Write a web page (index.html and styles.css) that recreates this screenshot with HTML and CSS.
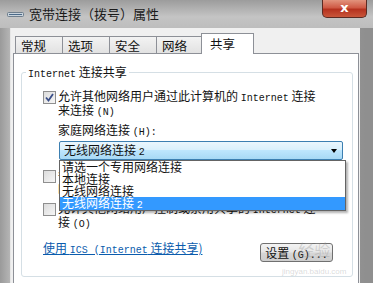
FILE: index.html
```html
<!DOCTYPE html>
<html lang="zh-CN">
<head>
    <meta charset="UTF-8">
    <title>宽带连接（拨号）属性</title>
    <link rel="stylesheet" href="styles.css">
</head>
<body>
    <div class="window">
        <div class="titlebar">
            <svg class="title-icon" width="17" height="6" viewBox="0 0 17 6">
                <rect x="0.5" y="1.5" width="16" height="4" rx="1" fill="#c9d3dc" stroke="#6f7e8c"/>
                <line x1="2" y1="3.5" x2="15" y2="3.5" stroke="#4b6a88"/>
            </svg>
            <div class="title">宽带连接（拨号）属性</div>
            <div class="close">x</div>
        </div>

        <div class="client">
            <div class="tabs">
                <div class="tab">常规</div>
                <div class="tab">选项</div>
                <div class="tab">安全</div>
                <div class="tab">网络</div>
                <div class="tab active">共享</div>
            </div>

            <div class="panel">
                <fieldset class="group">
                    <legend><span class="en">Internet</span> 连接共享</legend>

                    <div class="option">
                        <span class="check checked">
                            <svg width="9" height="9" viewBox="0 0 9 9"><path d="M1 4.5 L3.5 7.5 L8 1" fill="none" stroke="#3b4f88" stroke-width="1.8"/></svg>
                        </span>
                        <div class="label">允许其他网络用户通过此计算机的 <span class="en">Internet</span> 连接<br>来连接 <span class="en">(N)</span></div>
                    </div>

                    <div class="home-label">家庭网络连接 <span class="en">(H):</span></div>

                    <div class="select-wrap">
                        <div class="select">
                            <span>无线网络连接 <span class="en">2</span></span>
                            <span class="arrow"></span>
                        </div>
                        <ul class="dropdown">
                            <li>请选一个专用网络连接</li>
                            <li>本地连接</li>
                            <li>无线网络连接</li>
                            <li class="selected">无线网络连接 <span class="en">2</span></li>
                        </ul>
                    </div>

                    <div class="option second">
                        <span class="check"></span>
                        <div class="label">每当这台计算机上的某个程序试图访问 <span class="en">Internet</span><br>时建立一个拨号连接 <span class="en">(E)</span></div>
                    </div>

                    <div class="option third">
                        <span class="check"></span>
                        <div class="label">允许其他网络用户控制或禁用共享的 <span class="en">Internet</span> 连<br>接 <span class="en">(O)</span></div>
                    </div>

                    <div class="footer">
                        <a class="link">使用 <span class="en">ICS (Internet</span> 连接共享)</a>
                        <div class="button">设置 <span class="en">(G)...</span></div>
                    </div>
                </fieldset>
            </div>
        </div>
        <div class="watermark">经验<br><small>jingyan.baidu.com</small></div>
    </div>
</body>
</html>
```

FILE: styles.css
```css
body {
    margin: 0;
    width: 373px;
    height: 283px;
    overflow: hidden;
    font-family: "Noto Sans CJK SC", sans-serif;
    font-size: 12px;
    line-height: 13px;
    color: #111;
}

.en {
    font-family: "Liberation Mono", monospace;
    font-size: 10px;
    line-height: 1;
}

.window {
    position: relative;
    height: 283px;
    overflow: hidden;
    background: linear-gradient(90deg, #9a9a9a 0%, #b8b8b8 3%, #a2a2a2 30%, #c7c7c7 60%, #8f8f8f 98%);
    display: flex;
    flex-direction: column;
}

.titlebar {
    height: 28px;
    flex-shrink: 0;
    display: flex;
    align-items: flex-start;
    padding-left: 7px;
    background: linear-gradient(180deg, #9c9c9c, #c4c4c4 60%, #bdbdbd);
}

.title-icon {
    margin-top: 11px;
}

.title {
    margin-top: 7px;
    margin-left: 5px;
    font-size: 13px;
    line-height: 14px;
    color: #1a1a1a;
}

.close {
    margin-left: auto;
    margin-right: 6px;
    width: 45px;
    height: 18px;
    box-sizing: border-box;
    border: 1px solid #5b2b23;
    border-top: none;
    border-radius: 0 0 5px 5px;
    background: linear-gradient(180deg, #e2937d, #cf5a45 45%, #b5321f 55%, #c9563a);
    color: #fff;
    font-family: "DejaVu Sans", sans-serif;
    font-weight: bold;
    font-size: 13px;
    line-height: 15px;
    text-align: center;
}

.client {
    flex: 1;
    margin-left: 10px;
    width: 350px;
    box-sizing: border-box;
    padding: 5px 1px 0 2px;
    background: #f0f0f0;
    border-left: 1px solid #e6e6e6;
}

.tabs {
    display: flex;
    padding-left: 2px;
    height: 20px;
    align-items: flex-end;
}

.tab {
    width: 47px;
    height: 17px;
    box-sizing: border-box;
    border: 1px solid #8d9097;
    border-bottom: none;
    border-right: none;
    padding-left: 5px;
    line-height: 17px;
    font-size: 12.5px;
    background: linear-gradient(180deg, #f3f3f3, #e2e2e2);
}

.tab.active {
    width: 53px;
    height: 21px;
    margin: 0 0 -1px -2px;
    padding-left: 8px;
    line-height: 20px;
    border-right: 1px solid #8d9097;
    background: #fff;
    position: relative;
}

.panel {
    height: 218px;
    overflow: hidden;
    background: #fff;
    border: 1px solid #8d9097;
    padding: 11px 0 0 7px;
}

.group {
    margin: 0;
    width: 332px;
    height: 212px;
    box-sizing: border-box;
    border: 1px solid #d5dfe5;
    border-radius: 3px;
    padding: 10px 8px 0 21px;
}

.group legend {
    padding: 0 2px;
    margin-left: -17px;
    line-height: 14px;
}

.option {
    display: flex;
    align-items: flex-start;
    gap: 2px;
}

.check {
    width: 13px;
    height: 13px;
    box-sizing: border-box;
    border: 1px solid #8f8f8f;
    background: linear-gradient(135deg, #dcdcdc, #f6f6f6);
    margin-top: 1px;
    display: flex;
    align-items: center;
    justify-content: center;
    flex-shrink: 0;
}

.label {
    line-height: 12.5px;
}

.home-label {
    margin: 5px 0 0 15px;
}

.select-wrap {
    position: relative;
    margin: 3px 0 0 16px;
    width: 284px;
}

.select {
    height: 19px;
    box-sizing: border-box;
    border: 1px solid #3c7fb1;
    border-radius: 2px;
    background: linear-gradient(180deg, #eaf6fd, #d9f0fc 45%, #bee6fd 50%, #a7d9f5);
    display: flex;
    align-items: center;
    justify-content: space-between;
    padding: 0 5px 0 4px;
}

.arrow {
    width: 0;
    height: 0;
    border-left: 3px solid transparent;
    border-right: 3px solid transparent;
    border-top: 4px solid #000;
}

.dropdown {
    position: absolute;
    top: 19px;
    left: 0;
    width: 285px;
    margin: 0;
    padding: 0;
    list-style: none;
    background: #fff;
    border: 1px solid #646464;
    box-shadow: 2px 2px 2px rgba(0, 0, 0, 0.3);
    z-index: 2;
}

.dropdown li {
    height: 12px;
    line-height: 12px;
    padding-left: 2px;
}

.dropdown li.selected {
    background: #3399ff;
    color: #fff;
    height: 13px;
}

.option.second {
    margin-top: 9px;
}

.option.third {
    margin-top: 5px;
}

.footer {
    display: flex;
    align-items: flex-start;
    justify-content: space-between;
    margin-top: 13px;
    padding-right: 11px;
}

.link {
    color: #0b5cad;
    text-decoration: underline;
    margin-top: -2px;
}

.button {
    width: 73px;
    height: 19px;
    box-sizing: border-box;
    border: 1px solid #707070;
    border-radius: 3px;
    background: linear-gradient(180deg, #f3f3f3, #e6e6e6 48%, #d6d6d6 52%, #cdcdcd);
    text-align: center;
    line-height: 17px;
}

.watermark {
    position: absolute;
    left: 282px;
    top: 240px;
    color: rgba(150, 150, 150, 0.35);
    font-size: 16px;
    line-height: 18px;
    text-align: center;
}

.watermark small {
    font-size: 8px;
    font-family: "Liberation Sans", sans-serif;
}
```
